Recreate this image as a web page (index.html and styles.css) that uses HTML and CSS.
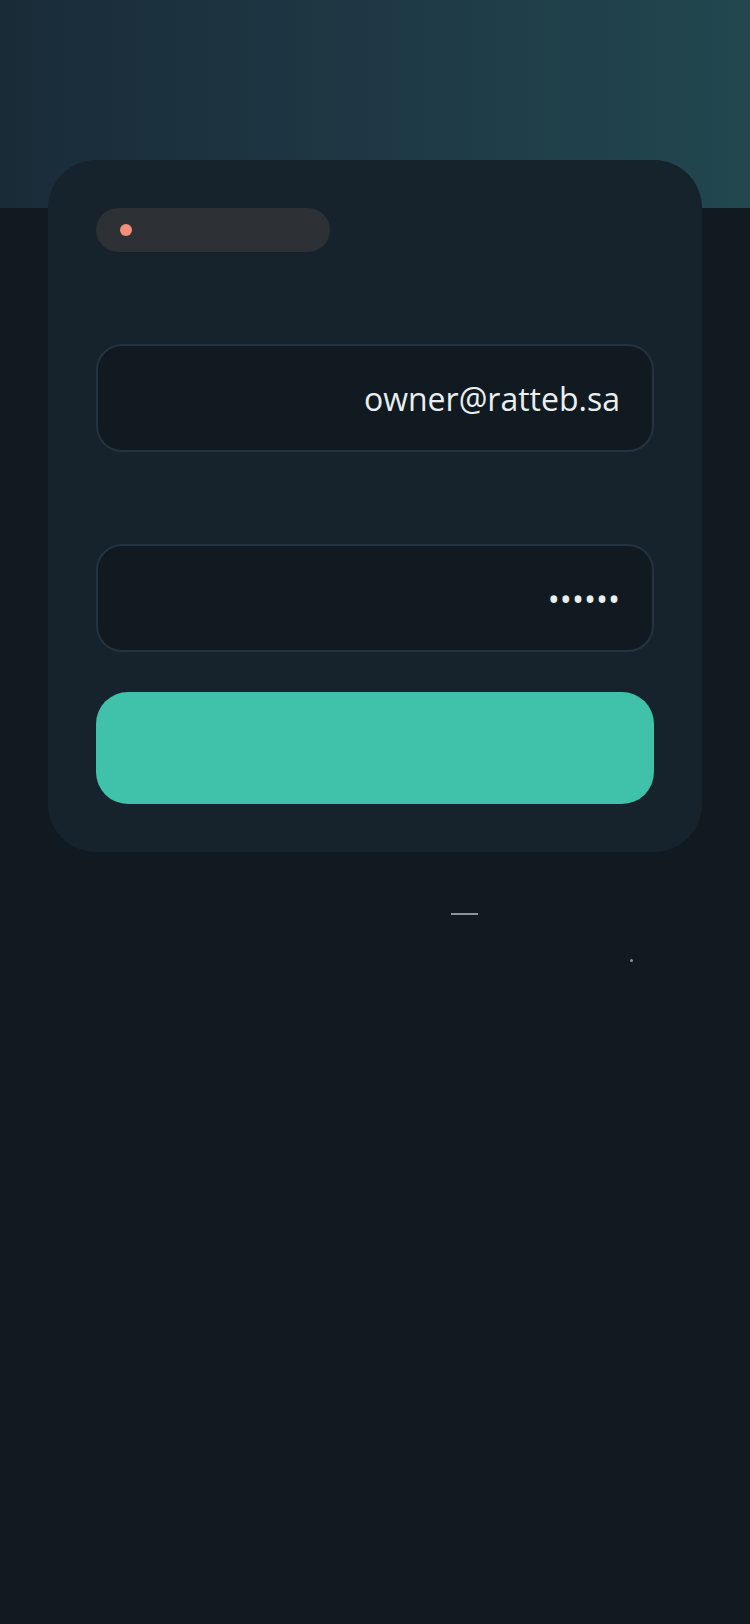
FILE: index.html
```html
<!DOCTYPE html>
<html lang="ar" dir="ltr">
<head>
<meta charset="utf-8">
<title>Login</title>
<link rel="stylesheet" href="styles.css">
</head>
<body>
<header class="hero"></header>
<main class="card">
  <div class="status-pill"><span class="status-dot"></span></div>
  <div class="field">
    <div class="field-label"></div>
    <input class="field-input" type="email" value="owner@ratteb.sa" readonly>
  </div>
  <div class="field">
    <div class="field-label"></div>
    <input class="field-input field-password" type="password" value="123456" readonly>
  </div>
  <button class="submit" type="button"></button>
</main>
<footer class="footer">
  <div class="footer-row footer-row-dash"><span class="dash"></span></div>
  <div class="footer-row footer-row-dot"><span class="dot"></span></div>
</footer>
</body>
</html>
```

FILE: styles.css
```css
* { box-sizing: border-box; }

html, body {
  margin: 0;
  padding: 0;
}

body {
  background: #111a20;
  font-family: "Open Sans", "Noto Sans", sans-serif;
  min-height: 1624px;
}

.hero {
  height: 208px;
  background: linear-gradient(90deg, #1a2b38 0%, #1e3a46 55%, #22474f 100%);
}

.card {
  margin: -48px 48px 0;
  background: #17232c;
  border-radius: 48px;
  padding: 48px;
  display: flex;
  flex-direction: column;
  gap: 40px;
  position: relative;
}

.status-pill {
  width: 234px;
  height: 44px;
  border-radius: 22px;
  background: #2d3034;
  display: flex;
  align-items: center;
  padding-left: 24px;
}

.status-dot {
  width: 12px;
  height: 12px;
  border-radius: 50%;
  background: #f38f79;
}

.field {
  display: flex;
  flex-direction: column;
}

.field-label {
  height: 52px;
}

.field-input {
  display: block;
  width: 100%;
  height: 108px;
  border: 2px solid #233340;
  border-radius: 26px;
  background: #111a20;
  color: #e9eef0;
  font-family: "Open Sans", sans-serif;
  font-size: 32px;
  text-align: right;
  padding: 0 32px 0 32px;
  outline: none;
  margin: 0;
}

.field-password {
  font-size: 32px;
  letter-spacing: 0;
}

.submit {
  display: block;
  width: 100%;
  height: 112px;
  border: none;
  border-radius: 32px;
  background: #40c1aa;
  margin: 0;
  padding: 0;
}

.footer {
  padding-top: 61px;
}

.footer-row {
  display: flex;
  justify-content: flex-end;
}

.footer-row-dash {
  padding-right: 272px;
}

.dash {
  width: 27px;
  height: 2px;
  background: #8a949b;
}

.footer-row-dot {
  margin-top: 44px;
  padding-right: 117px;
}

.dot {
  width: 3px;
  height: 3px;
  border-radius: 50%;
  background: #8a949a;
}
```
